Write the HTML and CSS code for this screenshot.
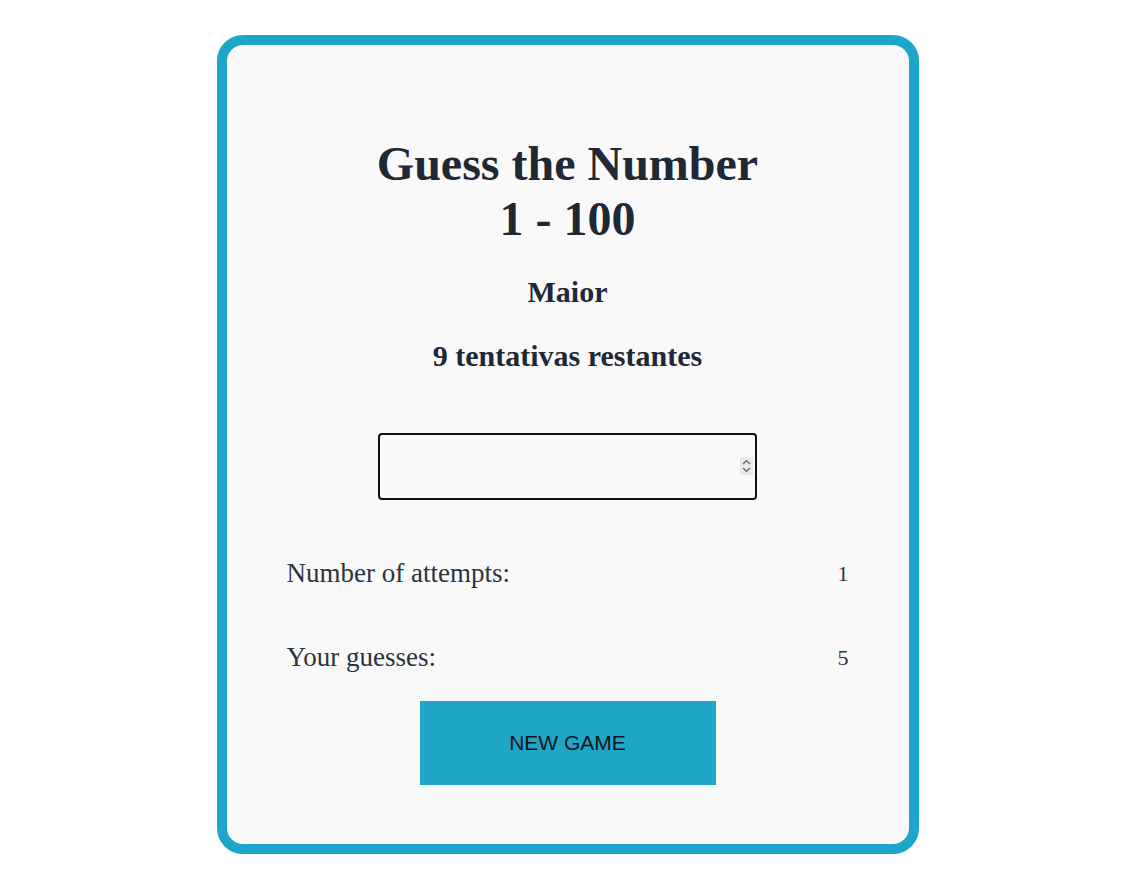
FILE: index.html
```html
<!DOCTYPE html>
<html lang="en">
<head>
<meta charset="utf-8">
<title>Guess the Number</title>
<link rel="stylesheet" href="styles.css">
</head>
<body>
<main class="card">
  <h1 class="title">Guess the Number<br>1 - 100</h1>
  <h2 class="hint">Maior</h2>
  <h2 class="remaining">9 tentativas restantes</h2>
  <div class="guess-field">
    <input class="guess-input" type="number" aria-label="Your guess">
    <span class="spinner" aria-hidden="true">
      <svg width="13" height="18" viewBox="0 0 13 18">
        <path d="M3 7 L6.5 3.8 L10 7" fill="none" stroke="#6b6b6b" stroke-width="1.4"/>
        <path d="M3 11 L6.5 14.2 L10 11" fill="none" stroke="#6b6b6b" stroke-width="1.4"/>
      </svg>
    </span>
  </div>
  <div class="stat-row first">
    <span>Number of attempts:</span>
    <span>1</span>
  </div>
  <div class="stat-row second">
    <span>Your guesses:</span>
    <span>5</span>
  </div>
  <button class="new-game" type="button">NEW GAME</button>
</main>
</body>
</html>
```

FILE: styles.css
```css
html, body {
  margin: 0;
  padding: 0;
  background: #ffffff;
}

body {
  font-family: "Liberation Serif", "Times New Roman", serif;
  color: #1f2a36;
  padding-left: 1px;
}

.card {
  box-sizing: border-box;
  width: 702px;
  margin: 35px auto 0;
  padding: 0 60px 59px;
  border: 10px solid #1ea6c9;
  border-radius: 26px;
  background: #f9f9f9;
  display: flex;
  flex-direction: column;
  align-items: center;
}

.title {
  margin: 91px 0 0;
  font-size: 48px;
  line-height: 55px;
  font-weight: bold;
  text-align: center;
  color: #1e2935;
}

.hint,
.remaining {
  margin: 0;
  font-size: 30px;
  line-height: 34px;
  font-weight: bold;
  text-align: center;
  color: #1e2935;
}

.hint {
  margin-top: 29px;
}

.remaining {
  margin-top: 30px;
}

.guess-field {
  position: relative;
  margin-top: 60px;
  width: 379px;
  height: 67px;
}

.guess-input {
  box-sizing: border-box;
  width: 100%;
  height: 100%;
  border: 2px solid #111111;
  border-radius: 4px;
  background: #f9f9f9;
  font-family: "Liberation Serif", serif;
  font-size: 24px;
  padding: 0 20px;
  outline: none;
  -moz-appearance: textfield;
}

.guess-input::-webkit-inner-spin-button,
.guess-input::-webkit-outer-spin-button {
  -webkit-appearance: none;
  margin: 0;
}

.spinner {
  position: absolute;
  right: 4px;
  top: 24px;
  width: 13px;
  height: 18px;
  background: #e9e9e9;
  display: flex;
}

.stat-row {
  align-self: stretch;
  display: flex;
  justify-content: space-between;
  font-size: 27px;
  line-height: 31px;
  color: #2a333e;
}

.stat-row span:last-child {
  font-size: 22px;
  padding-right: 0;
}

.stat-row.first {
  margin-top: 58px;
}

.stat-row.second {
  margin-top: 53px;
}

.new-game {
  margin-top: 28px;
  width: 296px;
  height: 84px;
  border: none;
  border-radius: 0;
  background: #1ea6c9;
  color: #101418;
  font-family: "Liberation Sans", Arial, sans-serif;
  font-size: 21px;
  cursor: pointer;
  padding: 0;
}
```
